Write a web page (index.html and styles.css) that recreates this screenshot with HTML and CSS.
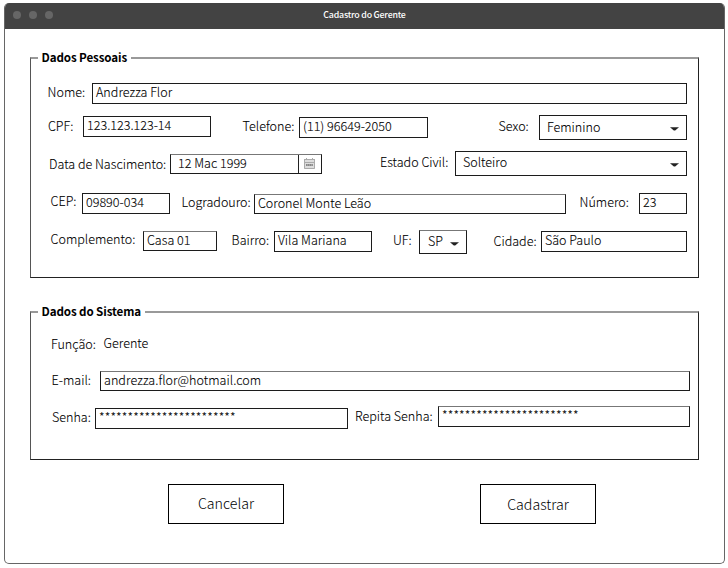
FILE: index.html
```html
<!DOCTYPE html>
<html lang="pt-BR">
<head>
<meta charset="utf-8">
<title>Cadastro do Gerente</title>
<link rel="stylesheet" href="styles.css">
</head>
<body>
<main class="window">
  <header class="titlebar">
    <div class="dots"><i></i><i></i><i></i></div>
    <h1>Cadastro do Gerente</h1>
  </header>

  <section class="group personal">
    <h2 class="legend">Dados Pessoais</h2>
    <div class="row r-name">
      <span class="label l-nome">Nome:</span><span class="field f-nome">Andrezza Flor</span>
    </div>
    <div class="row r-docs">
      <span class="label l-cpf">CPF:</span><span class="field f-cpf">123.123.123-14</span>
      <span class="label l-tel">Telefone:</span><span class="field f-tel">(11) 96649-2050</span>
      <span class="label l-sexo">Sexo:</span><span class="field select f-sexo"><b>Feminino</b><svg class="caret" viewBox="0 0 9 4"><path d="M0 0.200h9L5.500 3.200Q4.500 4 3.500 3.200z"/></svg></span>
    </div>
    <div class="row r-birth">
      <span class="label l-data">Data de Nascimento:</span><span class="field soft date f-data"><b>12 Mac 1999</b><span class="cal"><svg viewBox="0 0 11 11"><path d="M0 1h11v10H0z" fill="#ddd"/><path d="M.5 1v9.500h10V1M0 1.500h11M0 4.500h11M2.500 0v2M8.500 0v2" fill="none" stroke="#aaa"/><path d="M2 7h7" stroke="#888" stroke-width="2" stroke-dasharray="1.500 .3"/></svg></span></span>
      <span class="label l-civil">Estado Civil:</span><span class="field select f-civil"><b>Solteiro</b><svg class="caret" viewBox="0 0 9 4"><path d="M0 0.200h9L5.500 3.200Q4.500 4 3.500 3.200z"/></svg></span>
    </div>
    <div class="row r-street">
      <span class="label l-cep">CEP:</span><span class="field f-cep">09890-034</span>
      <span class="label l-log">Logradouro:</span><span class="field soft f-log">Coronel Monte Leão</span>
      <span class="label l-num">Número:</span><span class="field f-num">23</span>
    </div>
    <div class="row r-city">
      <span class="label l-comp">Complemento:</span><span class="field soft f-comp">Casa 01</span>
      <span class="label l-bairro">Bairro:</span><span class="field f-bairro">Vila Mariana</span>
      <span class="label l-uf">UF:</span><span class="field soft select f-uf"><b>SP</b><svg class="caret" viewBox="0 0 9 4"><path d="M0 0.200h9L5.500 3.200Q4.500 4 3.500 3.200z"/></svg></span>
      <span class="label l-cidade">Cidade:</span><span class="field f-cidade">São Paulo</span>
    </div>
  </section>

  <section class="group system">
    <h2 class="legend">Dados do Sistema</h2>
    <div class="row r-role">
      <span class="label l-func">Função:</span><span class="label l-role">Gerente</span>
    </div>
    <div class="row r-mail">
      <span class="label l-mail">E-mail:</span><span class="field soft f-mail">andrezza.flor@hotmail.com</span>
    </div>
    <div class="row r-pass">
      <span class="label l-senha">Senha:</span><span class="field stars f-senha">************************</span>
      <span class="label l-rep">Repita Senha:</span><span class="field soft stars f-rep">************************</span>
    </div>
  </section>

  <footer class="actions">
    <button type="button">Cancelar</button>
    <button type="button" class="submit">Cadastrar</button>
  </footer>
</main>
</body>
</html>
```
FILE: styles.css
```css
* { box-sizing: border-box; }
body {
  margin: 0;
  padding: 3px 3px 4px 4px;
  background: #fff;
  color: #000;
  font: 300 12.55px/20px "Noto Sans CJK JP", sans-serif;
}
.window {
  height: 561px;
  border: 1px solid #666;
  border-top: 0;
  border-radius: 5px;
  overflow: hidden;
}
.titlebar {
  height: 26px;
  margin: 0 -1px;
  background: #434343;
  display: grid;
  grid-template-columns: 1fr auto 1fr;
  align-items: start;
}
.dots { display: flex; gap: 8px; padding: 8px 0 0 9px; }
.dots i { width: 8px; height: 8px; border-radius: 50%; background: #666; }
h1 {
  margin: 2px 0 0;
  font-size: 8.800px;
  letter-spacing: -0.200px;
  font-weight: 500;
  color: #fff;
}
.group {
  width: 669px;
  margin-left: 25px;
  border: 1px solid #222;
  border-top: 2px solid #999;
  border-left-color: #555;
}
.personal { height: 221px; margin-top: 28px; }
.system { height: 149px; margin-top: 33px; }
.legend {
  width: max-content;
  height: 20px;
  margin: -12px 0 0 7px;
  padding: 0 4px 0 3.500px;
  background: #fff;
  color: #000;
  font-size: 11.600px;
  letter-spacing: -0.100px;
  font-weight: 700;
}
.row {
  display: flex;
  align-items: flex-start;
  white-space: nowrap;
  -webkit-text-stroke: 0.1px #000;
}
.label { flex: none; }
.field {
  flex: none;
  height: 21px;
  border: 1px solid #1c1c1c;
  padding-left: 3px;
  line-height: 16px;
}
.soft { border-top-color: #777; }
.stars { letter-spacing: 0.140px; line-height: 15px; }
.field b { font-weight: 300; }
.select { display: flex; justify-content: space-between; height: 25px; padding: 0 7px; line-height: 21px; }
.caret { width: 9px; height: 4px; margin-top: 11px; fill: #222; }
.date { display: flex; justify-content: space-between; padding-left: 7px; }
.cal { width: 23px; border-left: 1px solid #222; padding: 3px 0 0 5px; }
.cal svg { display: block; width: 11px; height: 11px; }

.r-name { height: 32px; margin-top: 16px; }
.l-nome { margin: -1px 0 0 16.600px; width: 44.400px; }
.f-nome { width: 595px; }

.r-docs { height: 36px; }
.l-cpf { margin: 1px 0 0 17px; width: 35px; }
.f-cpf { margin-top: 1px; width: 128px; }
.l-tel { margin: 1px 0 0 31.600px; width: 56.400px; }
.f-tel { margin-top: 2px; width: 129px; }
.l-sexo { margin: 1px 0 0 70.600px; width: 40.400px; }
.f-sexo { width: 148px; }

.r-birth { height: 42px; }
.l-data { margin: 3px 0 0 18px; width: 121px; }
.f-data { margin-top: 3px; width: 152px; height: 20px; }
.l-civil { margin: 1px 0 0 58px; width: 75px; }
.f-civil { width: 232px; line-height: 20px; }

.r-street { height: 37px; }
.l-cep { margin: -2px 0 0 19.600px; width: 31.400px; }
.f-cep { width: 88px; }
.l-log { width: 72.400px; margin: -1px 0 0 11.600px; }
.f-log { margin-top: 1px; width: 312px; height: 20px; }
.l-num { width: 59.400px; margin: -1px 0 0 13.600px; }
.f-num { width: 48px; }

.r-city { height: 30px; }
.l-comp { width: 92.400px; margin: -1px 0 0 19.600px; }
.f-comp { margin-top: 1px; width: 74px; height: 20px; line-height: 15px; }
.l-bairro { width: 42.400px; margin-left: 14.600px; }
.f-bairro { margin-top: 1px; width: 98px; }
.l-uf { width: 26px; margin-left: 21px; }
.f-uf { width: 48px; height: 24px; padding-left: 8px; line-height: 20px; }
.l-cidade { width: 47.400px; margin: 1px 0 0 26.600px; }
.f-cidade { margin-top: 1px; width: 146px; }

.r-role { height: 35px; margin-top: 14px; }
.l-func { width: 52.600px; margin: -1px 0 0 20px; }
.l-role { margin-top: -2px; }
.r-mail { height: 36px; }
.l-mail { width: 48.400px; margin-left: 20.600px; }
.f-mail { width: 590px; margin-top: 1px; height: 20px; line-height: 15px; letter-spacing: 0.040px; }
.r-pass { height: 30px; }
.l-senha { width: 43px; margin: 1px 0 0 21px; }
.f-senha { width: 253px; margin-top: 2px; }
.l-rep { width: 83px; margin-left: 7px; }
.f-rep { width: 252px; }

.actions { display: flex; gap: 196px; margin: 24px 0 0 163px; }
button {
  width: 116px;
  height: 40px;
  padding: 0 0 2px;
  border: 1px solid #000;
  background: #fff;
  color: #000;
  font: 300 14.200px/20px "Noto Sans CJK JP", sans-serif;
}
.submit { padding-bottom: 0; }
```
